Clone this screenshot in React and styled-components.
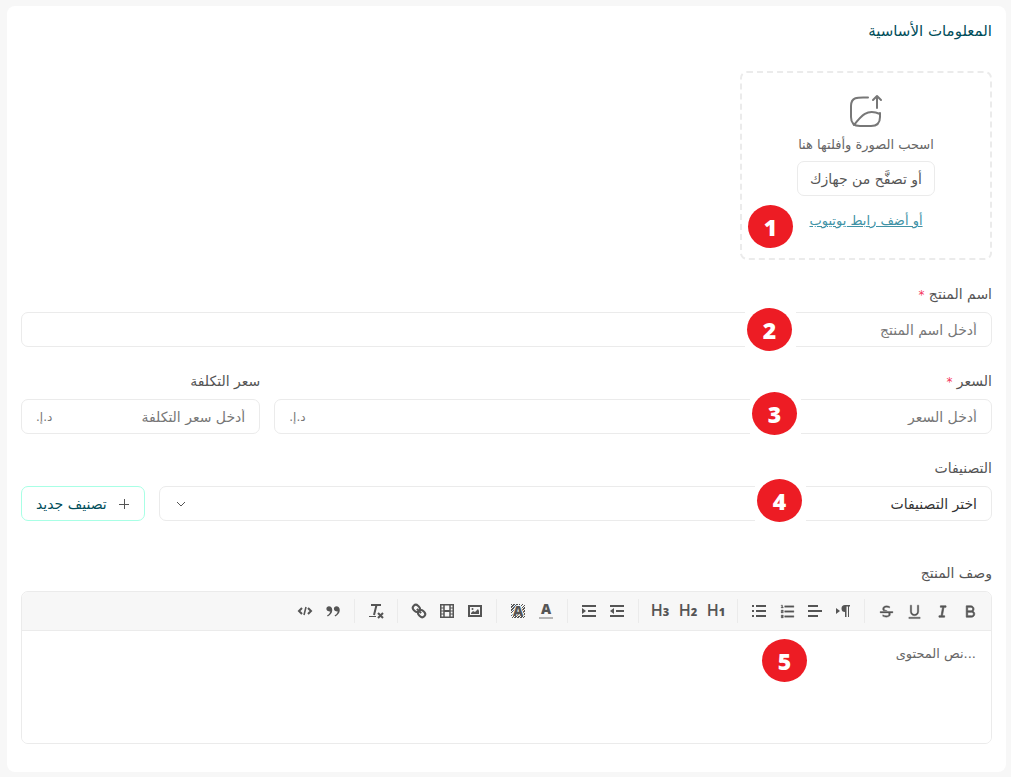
import React from 'react';
import styled, { createGlobalStyle } from 'styled-components';
import {
  RiBold,
  RiItalic,
  RiUnderline,
  RiStrikethrough,
  RiDoubleQuotesR,
  RiListOrdered,
} from 'react-icons/ri';

const GlobalStyle = createGlobalStyle`
  * {
    box-sizing: border-box;
  }

  body {
    margin: 0;
    background: #f7f7f7;
    color: #555;
    font-family: 'DejaVu Sans', sans-serif;
    font-size: 14px;
    line-height: 20px;
  }

  button, input, select, textarea {
    font: inherit;
    color: inherit;
  }
`;

const Page = styled.main`
  padding: 6px 5px 5px 7px;
`;

const Card = styled.form`
  padding: 14px 14px 28px;
  background: #fff;
  border-radius: 8px;
`;

const Title = styled.h1`
  margin: 0 0 29px;
  color: #004d5a;
  font-size: 15px;
  font-weight: normal;
  line-height: 22px;
`;

const DropZone = styled.section`
  position: relative;
  display: flex;
  flex-direction: column;
  align-items: center;
  width: 252px;
  height: 189px;
  padding-top: 20px;
  border: 2px dashed #ebebeb;
  border-radius: 7px;
`;

const DropHint = styled.p`
  margin: 6px 0;
  color: #666;
  font-size: 13px;
`;

const BrowseButton = styled.button`
  height: 35px;
  padding: 0 12px;
  background: #fff;
  border: 1px solid #ebebeb;
  border-radius: 7px;
`;

const YoutubeLink = styled.a`
  margin-top: 15px;
  color: #4092a5;
  font-size: 13px;
  text-decoration: underline;
`;

const Field = styled.div`
  margin-top: ${props => (props.$spaced ? '42px' : '24px')};
`;

const Label = styled.label`
  display: block;
  margin-bottom: 8px;
`;

const Required = styled.span`
  color: #f5365c;
  font-size: 12px;
  line-height: 1;
`;

const PriceRow = styled.div`
  display: grid;
  grid-template-columns: 3fr 1fr;
  gap: 14px;
`;

const Control = styled.div`
  position: relative;
  display: flex;
  flex: 1;
  align-items: center;
  height: 35px;
  background: #fff;
  border: 1px solid #ebebeb;
  border-radius: 7px;
`;

const TextInput = styled.input`
  flex: 1;
  min-width: 0;
  height: 100%;
  padding: 0 14px;
  background: none;
  border: 0;
  outline: 0;

  &::placeholder {
    color: #777;
    opacity: 1;
  }
`;

const Currency = styled.span`
  padding-left: 14px;
  color: #777;
  font-size: 12px;
`;

const Select = styled.select`
  flex: 1;
  height: 100%;
  padding: 0 14px;
  appearance: none;
  background: none;
  border: 0;
  outline: 0;
  color: #333;
`;

const Chevron = styled.svg`
  margin-left: 16px;
  pointer-events: none;
`;

const CategoryRow = styled.div`
  display: flex;
  gap: 14px;
`;

const NewCategoryButton = styled.button`
  display: flex;
  align-items: center;
  justify-content: space-between;
  width: 124px;
  height: 35px;
  padding: 0 14px;
  background: #fff;
  border: 1px solid #a8ffe5;
  border-radius: 7px;
  color: #004d5a;
`;

const Editor = styled.div`
  overflow: hidden;
  border: 1px solid #ebebeb;
  border-radius: 7px;
`;

const Toolbar = styled.div`
  display: flex;
  padding: 7px;
  background: #f7f7f7;
  border-bottom: 1px solid #ebebeb;
`;

const ToolGroup = styled.div`
  display: flex;

  & + & {
    margin-right: 7px;
    padding-right: 7px;
    border-right: 1px solid #ebebeb;
  }
`;

const Tool = styled.button`
  display: flex;
  align-items: center;
  justify-content: center;
  width: 28px;
  height: 24px;
  padding: 0;
  background: none;
  border: 0;
  color: #555;
  direction: ltr;
`;

const Heading = styled.span`
  font-family: 'Open Sans', sans-serif;
  font-size: 16px;
  font-weight: 600;
  line-height: 18px;

  small {
    font-size: 11px;
    font-weight: 800;
  }
`;

const LetterTool = styled.span`
  width: 14px;
  height: 16px;
  border-bottom: ${props => (props.$bar ? '2px solid #b5b5b5' : '0')};
  background: ${props => (props.$hatched ? 'repeating-linear-gradient(135deg, #555 0 1px, transparent 1px 2px) center / 14px 14px no-repeat' : 'none')};
  font-family: 'Open Sans', sans-serif;
  font-size: 14px;
  font-weight: 800;
  line-height: ${props => (props.$bar ? '12px' : '16px')};
  text-align: center;
  text-shadow: 1px 0 #f7f7f7, -1px 0 #f7f7f7, 0 -1px #f7f7f7;
`;

const EditorBody = styled.div`
  position: relative;
  display: flex;
`;

const TextArea = styled.textarea`
  flex: 1;
  height: 112px;
  padding: 13px 15px;
  background: #fff;
  border: 0;
  outline: 0;
  font-size: 13px;
  resize: none;

  &::placeholder {
    color: #666;
    opacity: 1;
  }
`;

const MarkerGap = styled.span`
  position: absolute;
  top: ${props => props.$top}px;
  right: ${props => props.$right}px;
  padding: 0 4px 0 2px;
  background: #fff;
`;

const MarkerDot = styled.span`
  display: flex;
  align-items: center;
  justify-content: center;
  width: 45px;
  height: 43px;
  background: #ed1c24;
  border-radius: 50%;
  color: #fff;
  font-family: 'Open Sans', sans-serif;
  font-size: 23px;
  font-weight: 800;
`;

const Marker = ({ number, top, right }) => (
  <MarkerGap $top={top} $right={right}>
    <MarkerDot>{number}</MarkerDot>
  </MarkerGap>
);

// Toolbar icons share an 18px grid
const Icon = ({ children }) => (
  <svg width="18" height="18" viewBox="0 0 18 18" fill="none" stroke="#555" strokeWidth="2">
    {children}
  </svg>
);

const DirectionIcon = () => (
  <Icon>
    <path d="M2 6v6l4-3z" fill="#555" stroke="none" />
    <path d="M11 3h5v1.500h-1V15h-1V4.500H12.500V15H11v-5a3.500 3.500 0 0 1 0-7z" fill="#555" stroke="none" />
  </Icon>
);

const AlignIcon = () => (
  <Icon>
    <path d="M2 4h10M2 9h14M2 14h10" />
  </Icon>
);

const BulletIcon = () => (
  <Icon>
    <path d="M6 4h10M6 9h10M6 14h10M2 4h2M2 9h2M2 14h2" />
  </Icon>
);

const OutdentIcon = () => (
  <Icon>
    <path d="M2 4h14M8 9h8M2 14h14" />
    <path d="M6 6v6L2 9z" fill="#555" stroke="none" />
  </Icon>
);

const IndentIcon = () => (
  <Icon>
    <path d="M2 4h14M8 9h8M2 14h14" />
    <path d="M2 6v6l4-3z" fill="#555" stroke="none" />
  </Icon>
);

const ImageIcon = () => (
  <Icon>
    <rect x="3" y="4" width="12" height="10" />
    <path d="M5 12v-1l2-2 2 1 3-3 1 2v3z" fill="#555" stroke="none" />
    <circle cx="6.500" cy="7" r="1" fill="#555" stroke="none" />
  </Icon>
);

const FilmIcon = () => (
  <Icon>
    <rect x="2.750" y="2.750" width="12.500" height="12.500" strokeWidth="1.500" />
    <path d="M6 3v12M12 3v12" strokeWidth="1.500" />
    <path d="M6 9h6" />
    <path d="M3 6h3M3 9h3M3 12h3M12 6h3M12 9h3M12 12h3" strokeWidth="1" />
  </Icon>
);

const LinkIcon = () => (
  <Icon>
    <g transform="rotate(45 9 9)">
      <rect x="1.500" y="6" width="7.500" height="6" rx="3" />
      <rect x="9" y="6" width="7.500" height="6" rx="3" />
      <path d="M6 9h6" />
    </g>
  </Icon>
);

const CleanIcon = () => (
  <Icon>
    <path d="M4 3h10M9.500 3L7 13" />
    <path d="M2 14.500h7" strokeWidth="1" />
    <path d="M11 11l5 5M16 11l-5 5" />
  </Icon>
);

const CodeIcon = () => (
  <Icon>
    <path d="M6 6L3 9l3 3M12 6l3 3-3 3" />
    <path d="M10 5l-2 8" strokeWidth="1.500" />
  </Icon>
);

const HeadingIcon = ({ level }) => (
  <Heading>H<small>{level}</small></Heading>
);

const heavy = { size: 17, stroke: '#555', strokeWidth: 1 };
const medium = { size: 17, stroke: '#555', strokeWidth: 0.5 };

const toolGroups = [
  [
    ['غامق', <RiBold {...heavy} />],
    ['مائل', <RiItalic {...heavy} />],
    ['تسطير', <RiUnderline {...medium} />],
    ['يتوسطه خط', <RiStrikethrough {...medium} />],
  ],
  [
    ['اتجاه النص', <DirectionIcon />],
    ['محاذاة', <AlignIcon />],
    ['قائمة مرقمة', <RiListOrdered {...medium} />],
    ['قائمة نقطية', <BulletIcon />],
  ],
  [
    ['عنوان 1', <HeadingIcon level={1} />],
    ['عنوان 2', <HeadingIcon level={2} />],
    ['عنوان 3', <HeadingIcon level={3} />],
  ],
  [
    ['إنقاص المسافة', <OutdentIcon />],
    ['زيادة المسافة', <IndentIcon />],
  ],
  [
    ['لون النص', <LetterTool $bar>A</LetterTool>],
    ['لون الخلفية', <LetterTool $hatched>A</LetterTool>],
  ],
  [
    ['صورة', <ImageIcon />],
    ['فيديو', <FilmIcon />],
    ['رابط', <LinkIcon />],
  ],
  [
    ['مسح التنسيق', <CleanIcon />],
  ],
  [
    ['اقتباس', <RiDoubleQuotesR size={18} />],
    ['كود', <CodeIcon />],
  ],
];

const EditorToolbar = () => (
  <Toolbar>
    {toolGroups.map((tools, index) => (
      <ToolGroup key={index}>
        {tools.map(([name, icon]) => (
          <Tool key={name} type="button" aria-label={name}>{icon}</Tool>
        ))}
      </ToolGroup>
    ))}
  </Toolbar>
);

const App = () => (
  <>
    <GlobalStyle />
    <Page dir="rtl" lang="ar">
      <Card>
        <Title>المعلومات الأساسية</Title>

        <DropZone>
          <svg width="36" height="36" viewBox="0 0 36 36" fill="none" stroke="#777" strokeWidth="2" strokeLinecap="round" strokeLinejoin="round">
            <path d="M20 4.500C9 4 3 4 3 13v11c0 6 3 9 9 9h11c6 0 9-3 9-9v-4" />
            <path d="M6 32C13 23 19 15 32 21" />
            <path d="M29 15V3M25 7l4-4 4 4" />
          </svg>
          <DropHint>اسحب الصورة وأفلتها هنا</DropHint>
          <BrowseButton type="button">أو تصفَّح من جهازك</BrowseButton>
          <YoutubeLink href="#youtube">أو أضف رابط يوتيوب</YoutubeLink>
          <Marker number={1} top={132} right={193} />
        </DropZone>

        <Field>
          <Label htmlFor="name">اسم المنتج <Required>*</Required></Label>
          <Control>
            <TextInput id="name" placeholder="أدخل اسم المنتج" />
            <Marker number={2} top={-5} right={195} />
          </Control>
        </Field>

        <PriceRow>
          <Field>
            <Label htmlFor="price">السعر <Required>*</Required></Label>
            <Control>
              <TextInput id="price" placeholder="أدخل السعر" />
              <Currency>د.إ.</Currency>
              <Marker number={3} top={-8} right={190} />
            </Control>
          </Field>
          <Field>
            <Label htmlFor="cost">سعر التكلفة</Label>
            <Control>
              <TextInput id="cost" placeholder="أدخل سعر التكلفة" />
              <Currency>د.إ.</Currency>
            </Control>
          </Field>
        </PriceRow>

        <Field>
          <Label htmlFor="categories">التصنيفات</Label>
          <CategoryRow>
            <Control>
              <Select id="categories">
                <option>اختر التصنيفات</option>
              </Select>
              <Chevron width="10" height="6" viewBox="0 0 10 6" fill="none" stroke="#555">
                <path d="M1 1l4 4 4-4" />
              </Chevron>
              <Marker number={4} top={-8} right={185} />
            </Control>
            <NewCategoryButton type="button">
              <svg width="12" height="12" viewBox="0 0 12 12" stroke="#555">
                <path d="M1 6.500h10M6.500 1v10" />
              </svg>
              تصنيف جديد
            </NewCategoryButton>
          </CategoryRow>
        </Field>

        <Field $spaced>
          <Label htmlFor="description">وصف المنتج</Label>
          <Editor>
            <EditorToolbar />
            <EditorBody>
              <TextArea id="description" placeholder="...نص المحتوى" />
              <Marker number={5} top={8} right={180} />
            </EditorBody>
          </Editor>
        </Field>
      </Card>
    </Page>
  </>
);

export default App;
